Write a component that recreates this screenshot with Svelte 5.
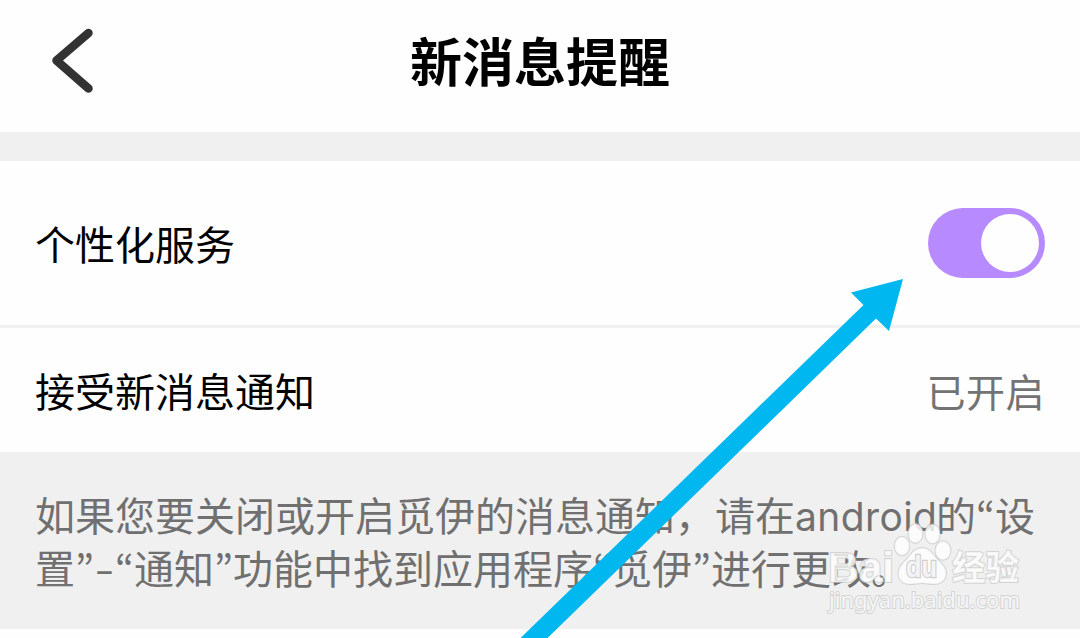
<script lang="ts">
    let enabled = $state(true);

    const noteLines = [
        [
            { text: "如果您要关闭或开启觅伊的消息通知，请在" },
            { text: "android", kind: "latin" },
            { text: "的" },
            { text: "“", kind: "quote" },
            { text: "设" },
        ],
        [
            { text: "置" },
            { text: "”", kind: "quote" },
            { text: "-", kind: "dash" },
            { text: "“", kind: "quote" },
            { text: "通知" },
            { text: "”", kind: "quote" },
            { text: "功能中找到应用程序" },
            { text: "“", kind: "quote" },
            { text: "觅伊" },
            { text: "”", kind: "quote" },
            { text: "进行更改。" },
        ],
    ];
</script>

<div class="screen">
    <header class="header">
        <button class="back" aria-label="返回">
            <svg width="48" height="70" viewBox="0 0 48 70">
                <path d="M42.5 8 L10.5 35.5 L42.5 63.5" />
            </svg>
        </button>
        <h1>新消息提醒</h1>
    </header>

    <main class="list">
        <div class="row service">
            <span>个性化服务</span>
            <button
                class="switch"
                class:on={enabled}
                role="switch"
                aria-checked={enabled}
                aria-label="个性化服务"
                onclick={() => (enabled = !enabled)}
            >
                <span class="knob"></span>
            </button>
        </div>
        <div class="row notify">
            <span>接受新消息通知</span>
            <span class="value">已开启</span>
        </div>
    </main>

    <section class="note">
        {#each noteLines as line}
            <div class="line">
                {#each line as part}<span class={part.kind ?? "cjk"}>{part.text}</span>{/each}
            </div>
        {/each}
    </section>

    <svg class="overlay" width="1080" height="638" viewBox="0 0 1080 638">
        <polygon
            class="arrow"
            points="903,279 851,292.5 863.5,305 520,638.5 547,638.5 876,318.5 889,331"
        />
        <g class="watermark">
            <text class="brand" x="828" y="582" textLength="66" lengthAdjust="spacingAndGlyphs">Bai</text>
            <ellipse cx="902" cy="546" rx="7.3" ry="9.3" />
            <ellipse cx="915.5" cy="533.5" rx="7" ry="9.5" />
            <ellipse cx="932.5" cy="534" rx="7.2" ry="9.5" />
            <ellipse cx="943" cy="550.5" rx="7.5" ry="9.3" />
            <path d="M922 548 C931 548 934 557 940 562 C950 571 947 584 934 584 C929 584 926 583 922 583 C918 583 915 584 910 584 C897 584 895 571 904 562 C910 557 913 548 922 548 Z" />
            <text class="du" x="906" y="577" textLength="31" lengthAdjust="spacingAndGlyphs">du</text>
            <text class="jingyan" x="952" y="580" textLength="67" lengthAdjust="spacingAndGlyphs">经验</text>
            <text class="site" x="829" y="608" textLength="191" lengthAdjust="spacingAndGlyphs">jingyan.baidu.com</text>
        </g>
    </svg>
</div>

<style>
    :global(body) {
        margin: 0;
        background: #fefefe;
    }

    .screen {
        position: relative;
        width: 1080px;
        height: 638px;
        overflow: hidden;
        background: #fefefe;
        color: #000;
        font-family: "Noto Sans CJK SC", sans-serif;
        font-size: 40px;
    }

    button {
        padding: 0;
        border: 0;
        background: none;
        cursor: pointer;
    }

    .header {
        display: grid;
        grid-template-columns: 48px 1fr 48px;
        align-items: center;
        box-sizing: border-box;
        height: 132px;
        padding: 0 46px 12px;
    }

    .back {
        display: flex;
    }

    .back path {
        fill: none;
        stroke: #333;
        stroke-width: 8.5;
        stroke-linecap: round;
        stroke-linejoin: round;
    }

    h1 {
        margin: 0;
        font-size: 52px;
        font-weight: 700;
        line-height: 76px;
        text-align: center;
    }

    .list {
        border-top: 29px solid #f0f0f0;
    }

    .row {
        display: flex;
        align-items: center;
        justify-content: space-between;
        box-sizing: border-box;
        padding: 0 35px;
        line-height: 60px;
    }

    .service {
        height: 167px;
        border-bottom: 3px solid #f0f0f0;
    }

    .notify {
        height: 124px;
    }

    .value {
        color: #737373;
        font-size: 39px;
        letter-spacing: 0.5px;
    }

    .switch {
        display: flex;
        align-items: center;
        box-sizing: border-box;
        width: 117px;
        height: 70px;
        padding: 0 6px;
        border-radius: 35px;
        background: #ccc;
    }

    .switch.on {
        justify-content: flex-end;
        background: #b88aff;
    }

    .knob {
        width: 58px;
        height: 58px;
        border-radius: 50%;
        background: #fefefe;
    }

    .note {
        box-sizing: border-box;
        height: 177px;
        padding: 36px 35px 0;
        background: #f0f0f0;
        color: #707070;
    }

    .line {
        display: flex;
        height: 53px;
        line-height: 53px;
        white-space: nowrap;
    }

    .latin {
        width: 141px;
        padding-top: 2px;
        font-family: Inter, sans-serif;
        font-size: 39px;
        letter-spacing: 0.4px;
    }

    .quote {
        width: 19px;
        font-family: "Noto Sans CJK KR", sans-serif;
        text-align: center;
    }

    .dash {
        width: 21px;
        text-align: center;
        transform: scaleX(1.4);
    }

    .overlay {
        position: absolute;
        inset: 0;
        pointer-events: none;
    }

    .arrow {
        fill: #00b7f0;
    }

    .watermark {
        fill: rgba(255, 255, 255, 0.8);
        stroke: rgba(200, 200, 200, 0.7);
        stroke-width: 2;
        paint-order: stroke;
    }

    .brand {
        font: 700 43px "Liberation Sans", sans-serif;
    }

    .du {
        fill: #f4f4f4;
        stroke: #cfcfcf;
        stroke-width: 2.5;
        font: 700 29px "Liberation Sans", sans-serif;
    }

    .jingyan {
        font: 700 34px "Noto Sans CJK SC", sans-serif;
    }

    .site {
        font: 400 22px "Noto Sans", sans-serif;
    }
</style>
